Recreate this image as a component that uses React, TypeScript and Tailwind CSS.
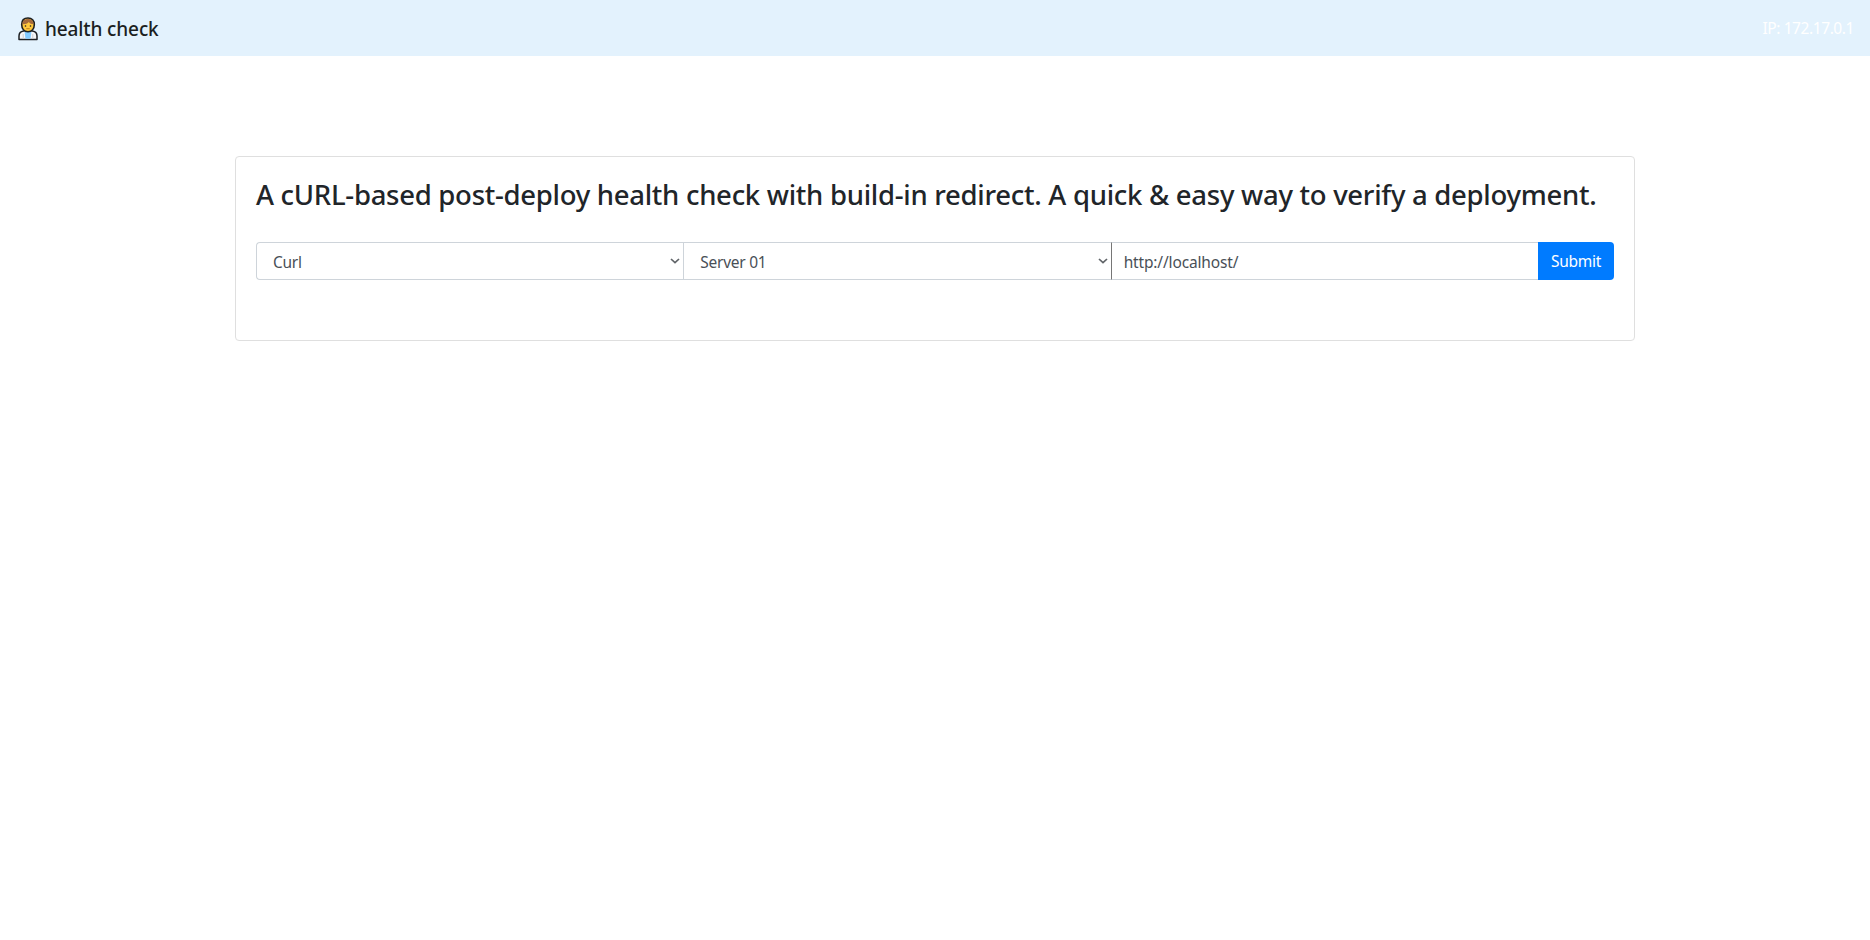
import type { ReactNode } from "react";

function DoctorIcon() {
  return (
    <svg width="20" height="24" viewBox="0 0 20 24" className="mt-0.5 shrink-0">
      <path d="M1 22.500v-3.500c0-3 1.600-4.700 4.600-5.100h8.800c3 .4 4.600 2.100 4.600 5.100v3.500z" fill="#f4f5f7" stroke="#1c1f22" strokeWidth="1.500" strokeLinejoin="round" />
      <path d="M6.500 14h7l-1 7.800h-5z" fill="#83cbff" />
      <path d="M5.200 17v4.800M14.800 17v4.800" stroke="#c9cdd2" strokeWidth="1" />
      <path d="M10 1C6 1 3.700 3.700 3.700 7.500c0 4.300 2.600 7.200 6.300 7.200s6.300-2.900 6.300-7.200C16.300 3.700 14 1 10 1z" fill="#ffc83d" stroke="#1c1f22" strokeWidth="1.600" />
      <path d="M4.400 7.300C4.400 4 6.500 1.900 10 1.900s5.600 2.100 5.600 5.400c-2.200 0-3.800-.8-4.800-2.200-1.300 1.600-3.400 2.300-6.400 2.200z" fill="#a56a3d" />
      <circle cx="7.500" cy="9" r=".8" fill="#1c1f22" />
      <circle cx="12.500" cy="9" r=".8" fill="#1c1f22" />
      <path d="M8.300 11.700h3.400" stroke="#a96a18" strokeWidth=".8" />
    </svg>
  );
}

function Select({ children, className }: { children: ReactNode; className: string }) {
  return (
    <div className={`flex h-[38px] w-[427.33px] shrink-0 items-center justify-between border-y border-l border-[#ced4da] pl-4 pr-[3px] pt-[3px] ${className}`}>
      <span>{children}</span>
      <svg width="10" height="6" viewBox="0 0 10 6" fill="none" stroke="#606468" strokeWidth="1.700" className="-mt-[3px]">
        <path d="M1 1l4 3.700L9 1" />
      </svg>
    </div>
  );
}

export default function App() {
  return (
    <div className="min-h-screen bg-white font-['Noto_Sans',sans-serif] text-[15.5px] text-[#212529]">
      <nav className="flex h-14 items-center justify-between bg-[#e3f2fd] px-4">
        <div className="flex items-center pl-0.5">
          <DoctorIcon />
          <span className="ml-[7px] pt-0.5 text-[19px] font-medium leading-[30px] tracking-[-0.12px] text-[#1b1f22]">health check</span>
        </div>
        <span className="pt-px tracking-[-0.42px] text-white">IP: 172.17.0.1</span>
      </nav>
      <main className="mx-auto mt-[100px] h-[185px] w-[1400px] rounded border border-[#dfdfdf] px-5 pt-5">
        <h1 className="h-[34px] whitespace-nowrap text-[27.5px] font-medium leading-[36px] tracking-[-0.28px]">
          A cURL-based post-deploy health check with build-in redirect. A quick &amp; easy way to verify a deployment.
        </h1>
        <form className="mt-[31px] flex h-[38px] text-[#495057]">
          <Select className="rounded-l tracking-[-0.3px]">Curl</Select>
          <Select className="tracking-[-0.26px]">Server 01</Select>
          <div className="flex w-[427.33px] shrink-0 items-center border-y border-l border-y-[#ced4da] border-l-[#767676] pl-3 pt-[3px] tracking-[-0.15px]">
            http://localhost/
          </div>
          <button type="button" className="w-[76px] rounded-r bg-[#007bff] pt-px tracking-[-0.25px] text-white">
            Submit
          </button>
        </form>
      </main>
    </div>
  );
}
